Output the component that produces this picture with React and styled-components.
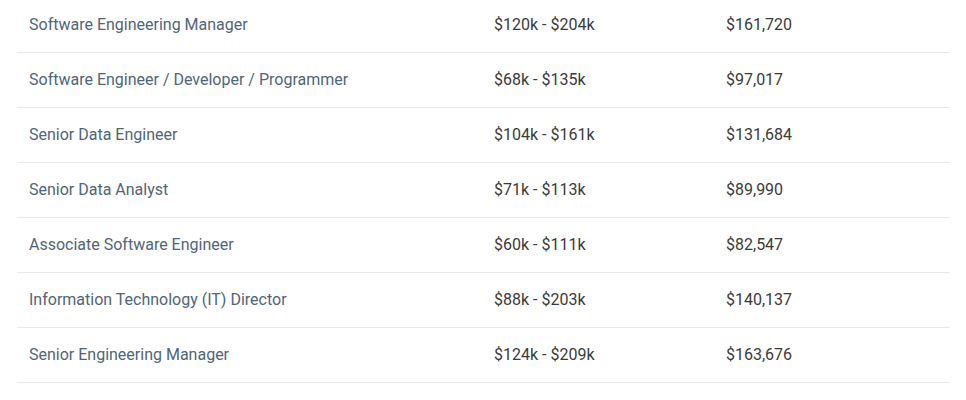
import React from 'react';
import styled, { createGlobalStyle } from 'styled-components';

const rows = [
    { title: 'Software Engineering Manager', range: '$120k - $204k', avg: '$161,720' },
    { title: 'Software Engineer / Developer / Programmer', range: '$68k - $135k', avg: '$97,017' },
    { title: 'Senior Data Engineer', range: '$104k - $161k', avg: '$131,684' },
    { title: 'Senior Data Analyst', range: '$71k - $113k', avg: '$89,990' },
    { title: 'Associate Software Engineer', range: '$60k - $111k', avg: '$82,547' },
    { title: 'Information Technology (IT) Director', range: '$88k - $203k', avg: '$140,137' },
    { title: 'Senior Engineering Manager', range: '$124k - $209k', avg: '$163,676' },
]

const App = () => {
    return (
        <>
            <GlobalStyle />
            <Table>
                {rows.map((row) => (
                    <Row key={row.title}>
                        <Title>{row.title}</Title>
                        <Cell>{row.range}</Cell>
                        <Cell>{row.avg}</Cell>
                    </Row>
                ))}
            </Table>
        </>
    )
}

export default App;

const GlobalStyle = createGlobalStyle`
    body {
        margin: 0;
        background: #fff;
        font-family: Roboto, "Liberation Sans", sans-serif;
    }
`

const Table = styled.div`
    width: 933px;
    margin: -2px 0 0 17px;
`

const Row = styled.div`
    display: grid;
    grid-template-columns: 465px 232px 1fr;
    align-items: center;
    height: 54px;
    border-bottom: 1px solid #e9e9e9;
`

const Cell = styled.div`
    padding-left: 12px;
    padding-bottom: 1px;
    font-size: 16px;
    color: #3a3a3a;
`

const Title = styled(Cell)`
    color: #4f657a;
`
